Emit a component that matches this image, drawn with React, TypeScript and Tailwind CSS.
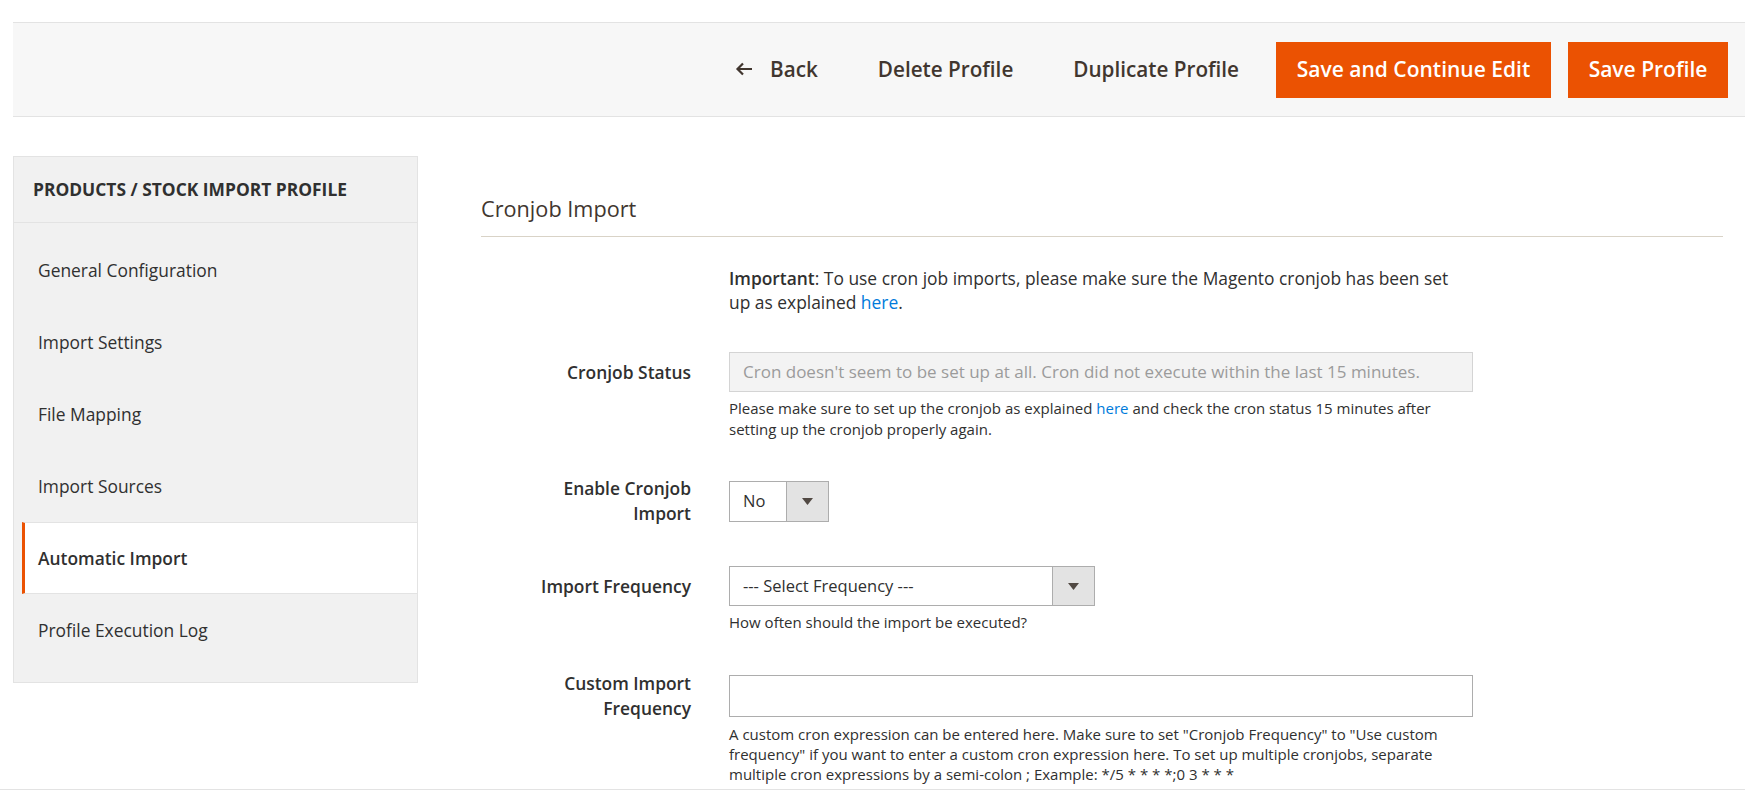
import React from "react";

const navItems = [
  "General Configuration",
  "Import Settings",
  "File Mapping",
  "Import Sources",
  "Automatic Import",
  "Profile Execution Log",
];

function ArrowLeft() {
  return (
    <svg width="18" height="14" viewBox="0 0 18 14" fill="none" stroke="currentColor" strokeWidth="2.2">
      <path d="M17 7H2.5M8 1.5 2.5 7 8 12.5" />
    </svg>
  );
}

function Caret() {
  return (
    <svg width="11" height="7" viewBox="0 0 11 7">
      <path d="M0 0h11L5.5 7z" fill="#514943" />
    </svg>
  );
}

function Select({ value, width, height }: { value: string; width: string; height: string }) {
  return (
    <div className={`flex border border-[#adadad] bg-white ${width} ${height}`}>
      <span className="flex flex-1 items-center pl-[13px] text-[16.5px] text-[#303030]">{value}</span>
      <span className="flex w-[42px] items-center justify-center border-l border-[#adadad] bg-[#e3e3e3]">
        <Caret />
      </span>
    </div>
  );
}

function Field({
  label,
  children,
  note,
  className,
  noteClass,
}: {
  label: React.ReactNode;
  children: React.ReactNode;
  note?: React.ReactNode;
  className?: string;
  noteClass?: string;
}) {
  return (
    <div className={`flex flex-col ${className ?? ""}`}>
      <div className="flex items-center">
        <div className="w-[210px] shrink-0 text-right text-[17.4px] font-semibold leading-[25px] text-[#303030]">{label}</div>
        <div className="ml-[38px] w-[744px]">{children}</div>
      </div>
      {note && (
        <p className={`ml-[248px] w-[744px] text-[15px] text-[#303030] ${noteClass ?? "mt-[6px] leading-[21px]"}`}>{note}</p>
      )}
    </div>
  );
}

function Here() {
  return <a className="text-[#007bdb]">here</a>;
}

export default function App() {
  return (
    <div className="flex h-[790px] flex-col overflow-hidden border-b border-[#e3e3e3] bg-white font-['Open_Sans',sans-serif]">
      <div className="ml-[13px] mt-[22px] flex h-[95px] shrink-0 items-center justify-end border-y border-[#e3e3e3] bg-[#f7f7f7] pr-[17px]">
        <a className="flex items-center gap-[17px] text-[20.7px] font-semibold text-[#41362f]">
          <ArrowLeft />
          Back
        </a>
        <a className="ml-[60px] text-[20.7px] font-semibold text-[#41362f]">Delete Profile</a>
        <a className="ml-[60px] text-[20.7px] font-semibold text-[#41362f]">Duplicate Profile</a>
        <button className="ml-[37px] h-[56px] w-[275px] bg-[#eb5202] text-[21px] font-semibold text-white">
          Save and Continue Edit
        </button>
        <button className="ml-[17px] h-[56px] w-[160px] bg-[#eb5202] text-[21px] font-semibold text-white">
          Save Profile
        </button>
      </div>

      <div className="flex flex-1 pl-[13px] pt-[39px]">
        <aside className="h-[527px] w-[405px] shrink-0 border border-[#e3e3e3] bg-[#f1f1f1]">
          <div className="flex h-[66px] items-center border-b border-[#e3e3e3] px-[19px] text-[17.4px] font-bold uppercase text-[#303030]">
            Products / Stock Import Profile
          </div>
          <ul className="pt-[11px]">
            {navItems.map((item) => {
              const active = item === "Automatic Import";
              return (
                <li
                  key={item}
                  className={
                    active
                      ? "ml-[8px] flex h-[72px] items-center border-y border-l-[3px] border-y-[#e3e3e3] border-l-[#eb5202] bg-white pl-[13px] text-[17.4px] font-semibold text-[#303030]"
                      : "ml-[8px] flex h-[72px] items-center border-l-[3px] border-transparent pl-[13px] text-[17.4px] text-[#303030]"
                  }
                >
                  {item}
                </li>
              );
            })}
          </ul>
        </aside>

        <main className="ml-[63px] flex-1 pr-[22px] pt-[39px]">
          <h2 className="border-b border-[#d9d3c7] pb-[13px] text-[21.7px] leading-7 text-[#41362f]">Cronjob Import</h2>

          <div className="ml-[248px] mt-[29px] w-[744px] text-[17.4px] leading-6 text-[#303030]">
            <strong className="font-semibold">Important</strong>: To use cron job imports, please make sure the Magento cronjob has been set up as explained <Here />.
          </div>

          <Field
            className="mt-[38px]"
            label="Cronjob Status"
            note={
              <>
                Please make sure to set up the cronjob as explained <Here /> and check the cron status 15 minutes after setting up the cronjob properly again.
              </>
            }
          >
            <div className="flex h-[40px] items-center border border-[#d4d4d4] bg-[#f3f3f3] px-[13px] text-[17px] text-[#9b9b9b]">
              Cron doesn't seem to be set up at all. Cron did not execute within the last 15 minutes.
            </div>
          </Field>

          <Field className="mt-[36px]" label={<>Enable Cronjob<br />Import</>}>
            <Select value="No" width="w-[100px]" height="h-[41px]" />
          </Field>

          <Field className="mt-[40px]" label="Import Frequency" note="How often should the import be executed?">
            <Select value="--- Select Frequency ---" width="w-[366px]" height="h-[40px]" />
          </Field>

          <Field
            className="mt-[38px]"
            noteClass="mt-[3px] leading-[20px]"
            label={<>Custom Import<br />Frequency</>}
            note={
              <>
                A custom cron expression can be entered here. Make sure to set "Cronjob Frequency" to "Use custom frequency" if you want to enter a custom cron expression here. To set up multiple cronjobs, separate multiple cron expressions by a semi-colon ; Example: */5 * * * *;0 3 * * *
              </>
            }
          >
            <div className="h-[42px] border border-[#adadad] bg-white" />
          </Field>
        </main>
      </div>
    </div>
  );
}
